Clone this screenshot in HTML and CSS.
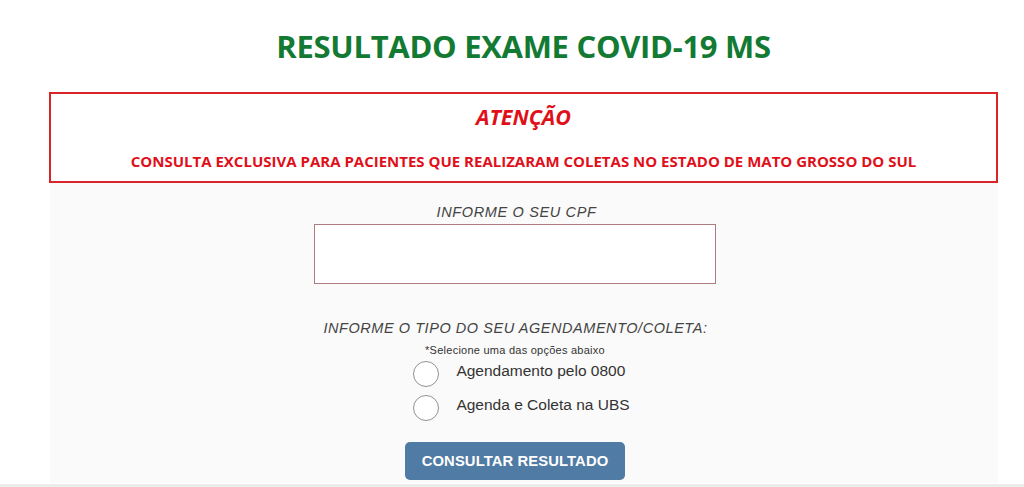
FILE: index.html
```html
<!DOCTYPE html>
<html lang="pt-BR">
<head>
<meta charset="utf-8">
<title>Resultado Exame COVID-19 MS</title>
<link rel="stylesheet" href="styles.css">
</head>
<body>
<div class="page">
  <h1 class="title">RESULTADO EXAME COVID-19 MS</h1>
  <div class="alert">
    <div class="alert-head">ATENÇÃO</div>
    <div class="alert-text">CONSULTA EXCLUSIVA PARA PACIENTES QUE REALIZARAM COLETAS NO ESTADO DE MATO GROSSO DO SUL</div>
  </div>
  <form class="panel">
    <label class="label label-cpf" for="cpf">INFORME O SEU CPF</label>
    <input class="cpf" id="cpf" type="text">
    <div class="label label-tipo">INFORME O TIPO DO SEU AGENDAMENTO/COLETA:</div>
    <div class="hint">*Selecione uma das opções abaixo</div>
    <div class="options">
      <label class="opt"><span class="radio"></span><span>Agendamento pelo 0800</span></label>
      <label class="opt"><span class="radio"></span><span>Agenda e Coleta na UBS</span></label>
    </div>
    <button class="btn" type="button">CONSULTAR RESULTADO</button>
  </form>
</div>
<div class="footer-line"></div>
</body>
</html>
```
FILE: styles.css
```css
html, body { margin: 0; padding: 0; background: #fff; }
body { height: 487px; overflow: hidden; position: relative; }
.page {
  width: 949px;
  margin-left: 49px;
  display: flex;
  flex-direction: column;
}
.title {
  margin: 27px 0 0 0;
  height: 65px;
  font-family: "Open Sans", sans-serif;
  font-weight: 700;
  font-size: 31px;
  line-height: 38px;
  color: #137a33;
  text-align: center;
  letter-spacing: -0.3px;
}
.alert {
  height: 87px;
  border: 2px solid #d9252a;
  box-sizing: content-box;
  text-align: center;
  color: #e0101b;
  font-family: "Open Sans", sans-serif;
  font-weight: 700;
}
.alert-head {
  margin-top: 9px;
  font-size: 21.5px;
  line-height: 28px;
  font-style: italic;
}
.alert-text {
  margin-top: 20px;
  font-size: 15px;
  line-height: 20px;
}
.panel {
  margin: 0 0 0 1px;
  height: 300px;
  background: #fafafa;
  display: flex;
  flex-direction: column;
  align-items: center;
  font-family: "Liberation Sans", Arial, sans-serif;
}
.label {
  margin-top: 21px;
  font-style: italic;
  font-size: 14.5px;
  line-height: 16px;
  color: #444;
}
.label-cpf { letter-spacing: 0.65px; margin-left: -15px; }
.cpf {
  margin: 4px 0 0 -18px;
  width: 402px;
  height: 60px;
  box-sizing: border-box;
  border: 1px solid #b07b7e;
  background: #fff;
  outline: none;
}
.label-tipo { margin-top: 36px; letter-spacing: 0.55px; margin-left: -17px; }
.hint {
  margin: 7px 0 0 -18px;
  font-size: 11px;
  line-height: 14px;
  letter-spacing: 0.25px;
  color: #333;
}
.options {
  margin: 4px 0 0 -5px;
  display: flex;
  flex-direction: column;
  gap: 8px;
}
.opt {
  display: flex;
  align-items: flex-start;
  gap: 17px;
  font-size: 15.5px;
  line-height: 20px;
  color: #333;
}
.radio {
  width: 26px;
  height: 26px;
  border: 1px solid #929292;
  border-radius: 50%;
  background: #fff;
  box-sizing: border-box;
}
.btn {
  margin: 21px 0 0 -18px;
  width: 220px;
  height: 38px;
  border: none;
  border-radius: 5px;
  background: #4f7ba4;
  color: #fff;
  font-family: "Liberation Sans", Arial, sans-serif;
  font-weight: 700;
  font-size: 14.8px;
  letter-spacing: 0.1px;
}
.footer-line {
  position: absolute;
  left: 0;
  right: 0;
  top: 484px;
  height: 3px;
  background: #ececec;
}
```
